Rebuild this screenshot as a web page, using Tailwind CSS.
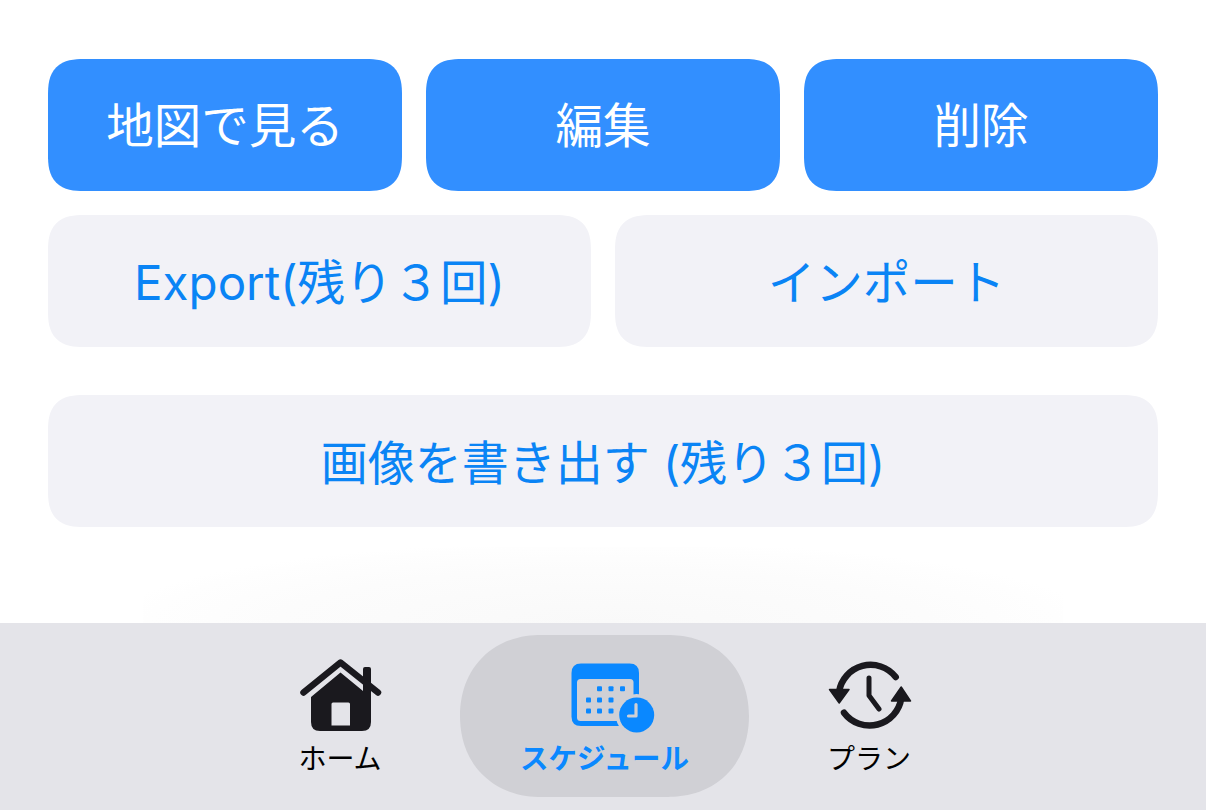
<!DOCTYPE html>
<html lang="ja">
<head>
<meta charset="utf-8">
<title>スケジュール</title>
<script src="https://cdn.jsdelivr.net/npm/@tailwindcss/browser@4"></script>
</head>
<body class="bg-white">
<div class="w-[1206px] h-[810px] overflow-hidden flex flex-col font-['Inter','Noto_Sans_CJK_JP',sans-serif]">
    <!-- Buttons -->
    <div class="flex flex-col px-[48px] pt-[59px]">
        <div class="flex gap-[24px] text-[47.5px] text-white">
            <button class="flex-1 h-[132px] pt-[2px] rounded-[36px] [corner-shape:superellipse(1.4)] bg-[#328fff]">地図で見る</button>
            <button class="flex-1 h-[132px] pt-[2px] rounded-[36px] [corner-shape:superellipse(1.4)] bg-[#328fff]">編集</button>
            <button class="flex-1 h-[132px] pt-[2px] rounded-[36px] [corner-shape:superellipse(1.4)] bg-[#328fff]">削除</button>
        </div>
        <div class="flex gap-[24px] mt-[24px] text-[47.5px] text-[#0a84f5]">
            <button class="flex-1 h-[132px] pt-[4px] rounded-[36px] [corner-shape:superellipse(1.4)] bg-[#f2f2f7]">Export(残り３回)</button>
            <button class="flex-1 h-[132px] pt-[4px] rounded-[36px] [corner-shape:superellipse(1.4)] bg-[#f2f2f7]">インポート</button>
        </div>
        <button class="h-[132px] mt-[48px] pt-[4px] rounded-[36px] [corner-shape:superellipse(1.4)] bg-[#f2f2f7] text-[47px] text-[#0a84f5]">画像を書き出す (残り３回)</button>
    </div>

    <!-- Glow above tab bar -->
    <div class="flex-1 flex justify-center items-end">
        <div class="w-[920px] h-[76px] bg-[radial-gradient(ellipse_at_bottom,#f9f9f9,#fcfcfc_50%,#fefefe_70%,#ffffff_76%)]"></div>
    </div>

    <!-- Tab bar -->
    <div class="h-[187px] bg-[#e4e4e9] flex justify-center pt-[12px] pl-[3px]">
        <div class="w-[240px] flex flex-col items-center pt-[23px]">
            <svg class="w-[84px] h-[76px] ml-[2px]" viewBox="299 658 84 76">
                <path d="M311 697 L340.5 672.5 L363 691 V669 Q363 667 365 667 H369 Q371 667 371 669 V697 V722 Q371 731 362 731 H320 Q311 731 311 722 Z M333 702.5 Q331.5 702.5 331.5 704 V725.5 H350 V704 Q350 702.5 348.5 702.5 Z" fill="#1a191e" fill-rule="evenodd"/>
                <path d="M303.5 692.5 L340.5 662.5 L378 692.5" fill="none" stroke="#1a191e" stroke-width="6.5" stroke-linecap="round" stroke-linejoin="round"/>
            </svg>
            <span class="text-[28px] leading-[32px] mt-[9px] text-black">ホーム</span>
        </div>
        <div class="w-[289px] h-[162px] rounded-[81px] [corner-shape:superellipse(1.1)] bg-[#d0d0d5] flex flex-col items-center pt-[27px]">
            <svg class="w-[86px] h-[72px] ml-[17px]" viewBox="570 662 86 72">
                <path d="M571.5 673 Q571.5 663.5 581 663.5 H629.5 Q639 663.5 639 673 V716.5 Q639 726 629.5 726 H581 Q571.5 726 571.5 716.5 Z" fill="#0a88ff"/>
                <rect x="577" y="679" width="56.5" height="42" rx="3.5" fill="#d0d0d5"/>
                <g fill="#0a88ff">
                    <rect x="597" y="686.3" width="5" height="5" rx="1"/><rect x="608.5" y="686.3" width="5" height="5" rx="1"/><rect x="620" y="686.3" width="5" height="5" rx="1"/>
                    <rect x="586" y="697.5" width="5" height="5" rx="1"/><rect x="597" y="697.5" width="5" height="5" rx="1"/><rect x="608.5" y="697.5" width="5" height="5" rx="1"/>
                    <rect x="586" y="708.5" width="5" height="5" rx="1"/><rect x="597" y="708.5" width="5" height="5" rx="1"/><rect x="608.5" y="708.5" width="5" height="5" rx="1"/>
                </g>
                <circle cx="636.7" cy="715" r="21" fill="#d0d0d5"/>
                <circle cx="636.7" cy="715" r="17.5" fill="#0a88ff"/>
                <path d="M636 704.5 V716 H628.5" fill="none" stroke="#d0d0d5" stroke-width="3.2" stroke-linecap="round" stroke-linejoin="round"/>
            </svg>
            <span class="text-[28.5px] leading-[32px] mt-[9px] font-bold text-[#0a88ff]">スケジュール</span>
        </div>
        <div class="w-[240px] flex flex-col items-center pt-[23px]">
            <svg class="w-[86px] h-[76px] ml-[1px]" viewBox="828 658 86 76">
                <path d="M840 692 A32 32 0 0 1 896.7 677" fill="none" stroke="#1a191e" stroke-width="6.5" stroke-linecap="round"/>
                <path d="M902.3 698 A32 32 0 0 1 845 712.7" fill="none" stroke="#1a191e" stroke-width="6.5" stroke-linecap="round"/>
                <path d="M830.5 689.5 H850 L840.2 703 Z M892.5 701 H911.5 L902.2 687 Z" fill="#1a191e" stroke="#1a191e" stroke-width="1.5" stroke-linejoin="round"/>
                <path d="M870 678 V695.5 L880 709" fill="none" stroke="#1a191e" stroke-width="5" stroke-linecap="round" stroke-linejoin="round"/>
            </svg>
            <span class="text-[28px] leading-[32px] mt-[9px] text-black">プラン</span>
        </div>
    </div>
</div>
</body>
</html>
